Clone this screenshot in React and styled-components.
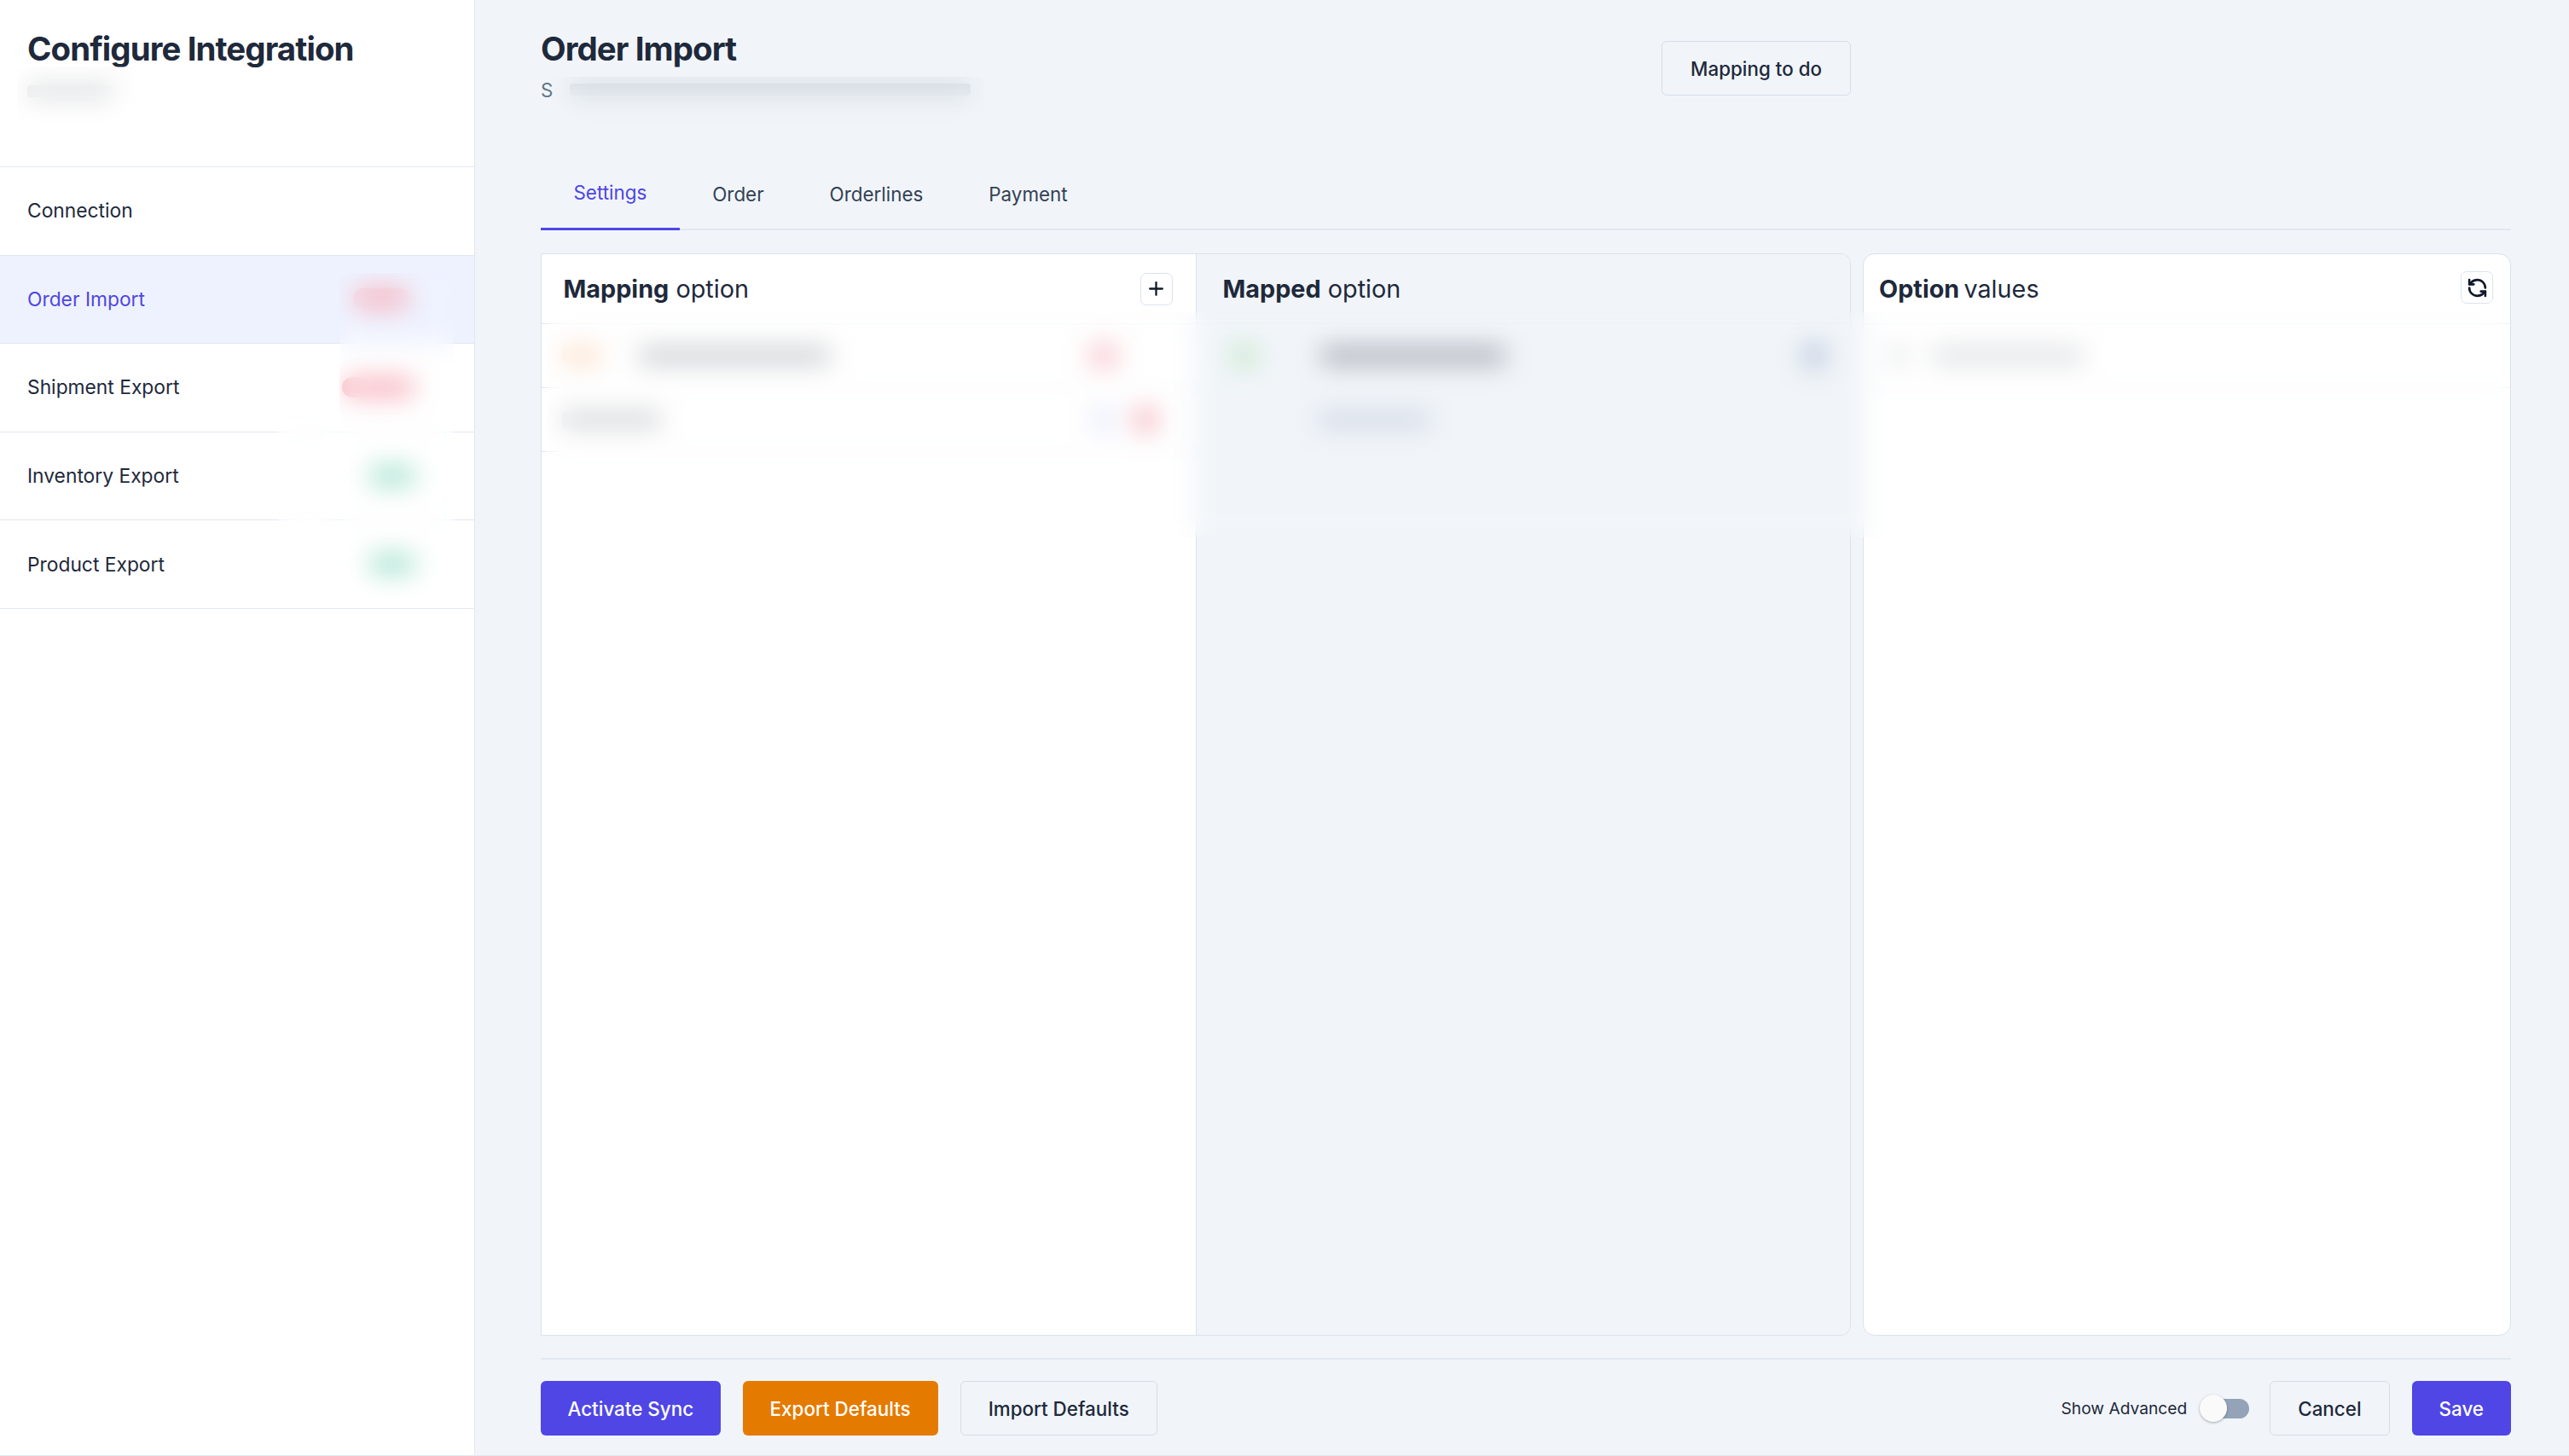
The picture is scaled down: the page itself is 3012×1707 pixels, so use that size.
import React from "react";
import styled, { createGlobalStyle } from "styled-components";
import { Plus, RefreshCcw } from "lucide-react";

const GlobalStyle = createGlobalStyle`
    html, body {
        margin: 0;
        padding: 0;
        background: #f1f5f9;
    }
    * {
        box-sizing: border-box;
    }
    body {
        font-family: Inter, "Noto Sans", sans-serif;
        color: #1e293b;
    }
`;

const Page = styled.div`
    display: flex;
    height: 1707px;
    border-bottom: 1px solid #e2e8f0;
    background: #f1f5f9;
    overflow: hidden;
`;

const Sidebar = styled.aside`
    position: relative;
    width: 557px;
    flex-shrink: 0;
    background: #fff;
    border-right: 1px solid #e2e8f0;
`;

const SidebarHead = styled.div`
    height: 195px;
    padding: 34px 32px 0;
`;

const SidebarTitle = styled.h1`
    margin: 0;
    font-size: 38.4px;
    line-height: 46px;
    font-weight: 700;
    letter-spacing: -0.9px;
`;

const SidebarSub = styled.div`
    width: 100px;
    height: 14px;
    margin-top: 20px;
    background: #d2d4d7;
    border-radius: 4px;
`;

const NavList = styled.nav`
    border-top: 1px solid #e2e8f0;
`;

const NavItem = styled.div`
    display: flex;
    align-items: center;
    justify-content: space-between;
    height: 103.6px;
    padding: 0 0 1px 32px;
    font-size: 22.8px;
    background: ${({ $active }) => ($active ? "#eef2ff" : "transparent")};
    color: ${({ $active }) => ($active ? "#4f46e5" : "#1e293b")};
    border-bottom: 1px solid #e2e8f0;
`;

const StatusPill = styled.span`
    width: ${({ $width }) => $width}px;
    height: 24px;
    margin-right: ${({ $right }) => $right}px;
    border-radius: 12px;
    background: ${({ $ok }) => ($ok ? "#a9e3d1" : "#f7b5bf")};
`;

const SidebarBlur = styled.div`
    position: absolute;
    left: ${({ $left }) => $left}px;
    top: ${({ $top }) => $top}px;
    width: ${({ $width }) => $width}px;
    height: ${({ $height }) => $height}px;
    backdrop-filter: blur(15px);
`;

const Main = styled.main`
    position: relative;
    flex: 1;
    display: flex;
    flex-direction: column;
    padding: 0 68px 23px 77px;
`;

const Header = styled.header`
    display: flex;
    justify-content: space-between;
    height: 172px;
    padding-top: 34px;
`;

const PageTitle = styled.h2`
    margin: 0;
    font-size: 38.4px;
    line-height: 46px;
    font-weight: 700;
    letter-spacing: -0.9px;
`;

const PageSub = styled.div`
    display: flex;
    align-items: center;
    height: 30px;
    margin-top: 10px;
    font-size: 22.4px;
    color: #64748b;
`;

const PageSubBar = styled.span`
    width: 470px;
    height: 14px;
    margin-left: 20px;
    background: #ccd2da;
    border-radius: 4px;
`;

const SubBlur = styled.div`
    position: absolute;
    left: 91px;
    top: 90px;
    width: 505px;
    height: 53px;
    backdrop-filter: blur(15px);
`;

const HeaderRight = styled.div`
    width: 996px;
    padding-top: 14px;
`;

const OutlineButton = styled.button`
    display: inline-flex;
    align-items: center;
    justify-content: center;
    height: 64px;
    padding: 0 ${({ $pad }) => $pad || 32}px;
    font-family: inherit;
    font-size: 22.4px;
    font-weight: 500;
    color: #1e293b;
    background: transparent;
    border: 1.5px solid #d5dde8;
    border-radius: 6px;
`;

const Tabs = styled.div`
    display: flex;
    height: 98px;
    border-bottom: 2px solid #e2e8f0;
    margin-bottom: 27px;
`;

const Tab = styled.div`
    display: flex;
    align-items: center;
    padding: ${({ $active }) => ($active ? "11px 38.5px 0" : "12px 38.5px 0")};
    height: 98px;
    font-size: 22.4px;
    color: ${({ $active }) => ($active ? "#4f46e5" : "#334155")};
    border-bottom: ${({ $active }) => ($active ? "3px solid #4f46e5" : "none")};
`;

const Panels = styled.div`
    flex: 1;
    display: flex;
    gap: 14px;
    min-height: 0;
`;

const PanelGroup = styled.div`
    display: flex;
    width: 1536px;
    border: 1.5px solid #dbe2ec;
    border-radius: 0 12px 12px 0;
    overflow: hidden;
`;

const Column = styled.section`
    flex: 1;
    background: ${({ $muted }) => ($muted ? "#f1f5f9" : "#fff")};
    border-right: ${({ $muted }) => ($muted ? "none" : "1.5px solid #dbe2ec")};
`;

const ValuesPanel = styled.section`
    flex: 1;
    background: #fff;
    border: 1.5px solid #dbe2ec;
    border-radius: 14px;
`;

const ColumnHead = styled.div`
    display: flex;
    align-items: center;
    justify-content: space-between;
    height: 82px;
    padding: ${({ $pad }) => $pad || "0 27px 0 25.5px"};
    border-bottom: 1px solid #e2e8f0;
`;

const ColumnTitle = styled.h3`
    margin: 0;
    font-size: 28.8px;
    font-weight: 400;
    word-spacing: ${({ $tight }) => ($tight ? "-3px" : "0")};

    strong {
        font-weight: 700;
    }
`;

const IconButton = styled.button`
    display: flex;
    align-items: center;
    justify-content: center;
    width: 38px;
    height: 38px;
    padding: 0;
    margin-top: ${({ $raise }) => ($raise ? "-3px" : "0")};
    color: #111827;
    background: #fff;
    border: 1.5px solid #dbe3ee;
    border-radius: 7px;
`;

const Row = styled.div`
    display: flex;
    align-items: center;
    gap: ${({ $gap }) => $gap || 44}px;
    height: 75px;
    padding: ${({ $pad }) => $pad || "0 24px"};
    border-bottom: 1px solid #e2e8f0;
`;

const Chip = styled.span`
    flex-shrink: 0;
    width: ${({ $w }) => $w}px;
    height: ${({ $h }) => $h || 18}px;
    border-radius: 4px;
    background: ${({ $color }) => $color};
    margin-left: ${({ $push }) => ($push ? "auto" : "0")};
    margin-right: ${({ $end }) => $end || 0}px;
`;

const PanelBlur = styled.div`
    position: absolute;
    left: 84px;
    top: 366px;
    width: 2302px;
    height: 264px;
    backdrop-filter: blur(15px);
`;

const Footer = styled.footer`
    display: flex;
    align-items: center;
    justify-content: space-between;
    margin-top: 26px;
    padding-top: 25px;
    border-top: 2px solid #e2e8f0;
`;

const ButtonGroup = styled.div`
    display: flex;
    align-items: center;
    gap: 26px;
`;

const SolidButton = styled.button`
    height: 64px;
    padding: 0 ${({ $pad }) => $pad || 32}px;
    font-family: inherit;
    font-size: 22.4px;
    font-weight: 500;
    color: #fff;
    background: ${({ $color }) => $color};
    border: none;
    border-radius: 6px;
`;

const Advanced = styled.div`
    display: flex;
    align-items: center;
    gap: 19px;
    margin-right: -2px;
    font-size: 19.2px;
    font-weight: 400;
`;

const Toggle = styled.span`
    position: relative;
    display: block;
    width: 54px;
    height: 23px;
    background: #94a3b8;
    border-radius: 12px;
`;

const ToggleKnob = styled.span`
    position: absolute;
    left: -4px;
    top: -4.5px;
    width: 32px;
    height: 32px;
    background: #fafafa;
    border-radius: 50%;
    box-shadow: 0 1px 3px rgba(15, 23, 42, 0.35);
`;

const navItems = [
    { label: "Connection" },
    { label: "Order Import", active: true, pill: { width: 66, right: 76 } },
    { label: "Shipment Export", pill: { width: 86, right: 69 } },
    { label: "Inventory Export", ok: true, pill: { width: 56, right: 68 } },
    { label: "Product Export", ok: true, pill: { width: 56, right: 68 } },
];

const tabs = ["Settings", "Order", "Orderlines", "Payment"];

const App = () => {
    return (
        <Page>
            <GlobalStyle />
            <Sidebar>
                <SidebarHead>
                    <SidebarTitle>Configure Integration</SidebarTitle>
                    <SidebarSub />
                </SidebarHead>
                <NavList>
                    {navItems.map((item) => (
                        <NavItem key={item.label} $active={item.active}>
                            {item.label}
                            {item.pill && <StatusPill $ok={item.ok} $width={item.pill.width} $right={item.pill.right} />}
                        </NavItem>
                    ))}
                </NavList>
                <SidebarBlur $left={398} $top={320} $width={134} $height={382} />
                <SidebarBlur $left={326} $top={440} $width={72} $height={190} />
                <SidebarBlur $left={20} $top={78} $width={150} $height={70} />
            </Sidebar>
            <Main>
                <Header>
                    <div>
                        <PageTitle>Order Import</PageTitle>
                        <PageSub>
                            S
                            <PageSubBar />
                        </PageSub>
                    </div>
                    <HeaderRight>
                        <OutlineButton $pad={33}>Mapping to do</OutlineButton>
                    </HeaderRight>
                </Header>
                <Tabs>
                    {tabs.map((tab, i) => (
                        <Tab key={tab} $active={i === 0}>{tab}</Tab>
                    ))}
                </Tabs>
                <Panels>
                    <PanelGroup>
                        <Column>
                            <ColumnHead>
                                <ColumnTitle><strong>Mapping</strong> option</ColumnTitle>
                                <IconButton><Plus size={25} strokeWidth={2.2} /></IconButton>
                            </ColumnHead>
                            <Row>
                                <Chip $w={46} $color="#fbdcc2" />
                                <Chip $w={224} $color="#c6c8cc" />
                                <Chip $w={34} $h={26} $color="#f9c6cd" $push $end={67} />
                            </Row>
                            <Row>
                                <Chip $w={116} $color="#d0d2d5" />
                                <Chip $w={26} $h={26} $color="#e6e9fa" $push $end={-21} />
                                <Chip $w={26} $h={26} $color="#f3b0b9" $end={22} />
                            </Row>
                        </Column>
                        <Column $muted>
                            <ColumnHead $pad="0 26px 0 31px">
                                <ColumnTitle><strong>Mapped</strong> option</ColumnTitle>
                            </ColumnHead>
                            <Row $pad="0 0 0 42px" $gap={76}>
                                <Chip $w={28} $h={24} $color="#c4e6c4" />
                                <Chip $w={216} $color="#a2a6af" />
                                <Chip $w={24} $h={28} $color="#b6c1d8" $push $end={30} />
                            </Row>
                            <Row $pad="0 0 0 142px">
                                <Chip $w={132} $color="#ced5e4" />
                            </Row>
                        </Column>
                    </PanelGroup>
                    <ValuesPanel>
                        <ColumnHead $pad="0 20px 0 18px">
                            <ColumnTitle $tight><strong>Option</strong> values</ColumnTitle>
                            <IconButton $raise><RefreshCcw size={25} strokeWidth={2.5} /></IconButton>
                        </ColumnHead>
                        <Row $pad="0 0 0 30px" $gap={30}>
                            <Chip $w={20} $color="#dcdee1" />
                            <Chip $w={178} $color="#dcdee1" />
                        </Row>
                    </ValuesPanel>
                </Panels>
                <Footer>
                    <ButtonGroup>
                        <SolidButton $color="#4f46e5" $pad={31.5}>Activate Sync</SolidButton>
                        <SolidButton $color="#e57a00">Export Defaults</SolidButton>
                        <OutlineButton>Import Defaults</OutlineButton>
                    </ButtonGroup>
                    <ButtonGroup>
                        <Advanced>
                            Show Advanced
                            <Toggle><ToggleKnob /></Toggle>
                        </Advanced>
                        <OutlineButton>Cancel</OutlineButton>
                        <SolidButton $color="#4f46e5">Save</SolidButton>
                    </ButtonGroup>
                </Footer>
                <SubBlur />
                <PanelBlur />
            </Main>
        </Page>
    );
};

export default App;
